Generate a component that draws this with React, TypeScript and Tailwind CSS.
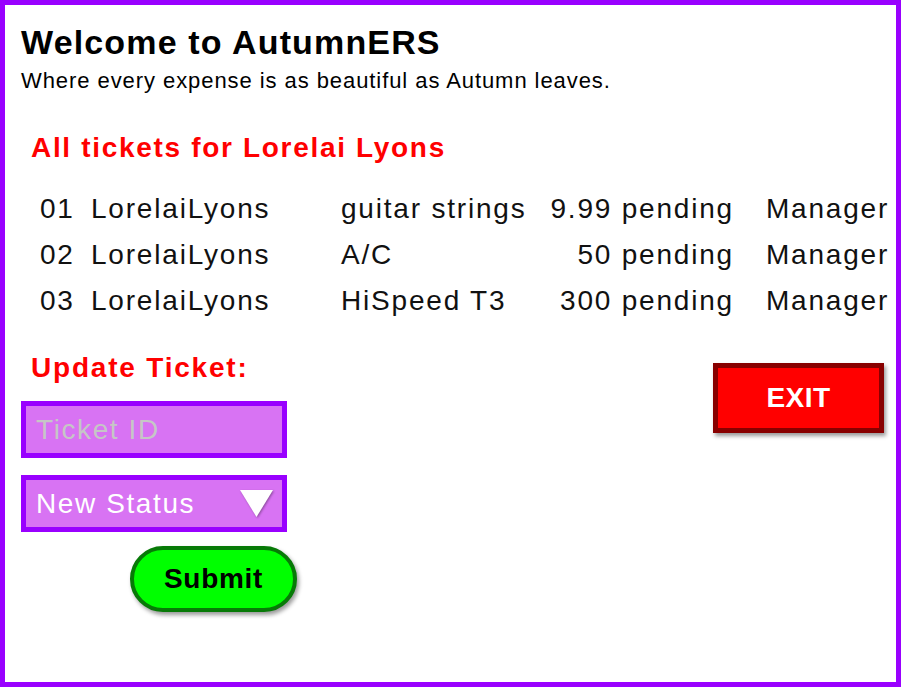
import React from 'react';

const tickets = [
    { id: '01', name: 'LorelaiLyons', desc: 'guitar strings', amount: '9.99', status: 'pending', to: 'Manager' },
    { id: '02', name: 'LorelaiLyons', desc: 'A/C', amount: '50', status: 'pending', to: 'Manager' },
    { id: '03', name: 'LorelaiLyons', desc: 'HiSpeed T3', amount: '300', status: 'pending', to: 'Manager' },
];

export default function App() {
    return (
        <div
            className="h-[687px] w-[901px] border-[5px] border-[#9900ff] bg-white pl-4 pr-[5px] pt-5 text-black"
            style={{ fontFamily: '"Liberation Sans", Arial, sans-serif' }}
        >
            {/* header */}
            <h1 className="text-[34px] leading-none font-bold tracking-[1.15px]">Welcome to AutumnERS</h1>
            <p className="mt-[11px] text-[22px] leading-none tracking-[0.93px]">
                Where every expense is as beautiful as Autumn leaves.
            </p>

            <h2 className="mt-[42px] ml-[10px] text-[28px] leading-none font-bold tracking-[1.68px] text-[#ff0000]">
                All tickets for Lorelai Lyons
            </h2>

            {/* ticket list */}
            <div className="mt-[24px] ml-[19px] grid grid-cols-[51px_250px_200px_193px_auto] text-[28px] leading-[46px] tracking-[1.8px] text-[#111]">
                {tickets.map(t => (
                    <React.Fragment key={t.id}>
                        <span>{t.id}</span>
                        <span>{t.name}</span>
                        <span>{t.desc}</span>
                        <span className="text-right">{t.amount} {t.status}</span>
                        <span className="pl-[32px] whitespace-nowrap">{t.to}</span>
                    </React.Fragment>
                ))}
            </div>

            {/* update form + exit */}
            <div className="mt-[30px] flex items-start justify-between pr-[7px]">
                <div className="flex flex-col">
                    <h2 className="ml-[10px] text-[28px] leading-none font-bold tracking-[1.8px] text-[#ff0000]">
                        Update Ticket:
                    </h2>

                    <input
                        type="text"
                        placeholder="Ticket ID"
                        className="mt-[19px] h-[57px] w-[266px] border-[5px] border-[#9900ff] bg-[#d873f3] px-[10px] text-[28px] tracking-[1.6px] text-white outline-none placeholder:text-[#c6c6c6]"
                    />

                    <div className="mt-[17px] flex h-[57px] w-[266px] items-center justify-between border-[5px] border-[#9900ff] bg-[#d873f3] pl-[10px] pr-[9px]">
                        <span className="text-[28px] leading-none tracking-[1.6px] text-white">New Status</span>
                        <svg width="33" height="28" viewBox="0 0 33 28" className="drop-shadow-[1px_1px_1px_rgba(0,0,0,0.35)]">
                            <polygon points="0,0 33,0 16.5,27" fill="#ffffff" />
                        </svg>
                    </div>

                    <button className="mt-[14px] ml-[109px] h-[66px] w-[167px] rounded-full border-[4px] border-[#077a07] bg-[#00ff00] text-[28px] font-bold tracking-[0.7px] text-black shadow-[2px_3px_4px_rgba(0,0,0,0.4)]">
                        Submit
                    </button>
                </div>

                <button className="mt-[9px] h-[70px] w-[171px] border-[5px] border-[#880000] bg-[#ff0000] text-[28px] font-bold tracking-[0.5px] text-white shadow-[2px_3px_4px_rgba(0,0,0,0.4)]">
                    EXIT
                </button>
            </div>
        </div>
    );
}
